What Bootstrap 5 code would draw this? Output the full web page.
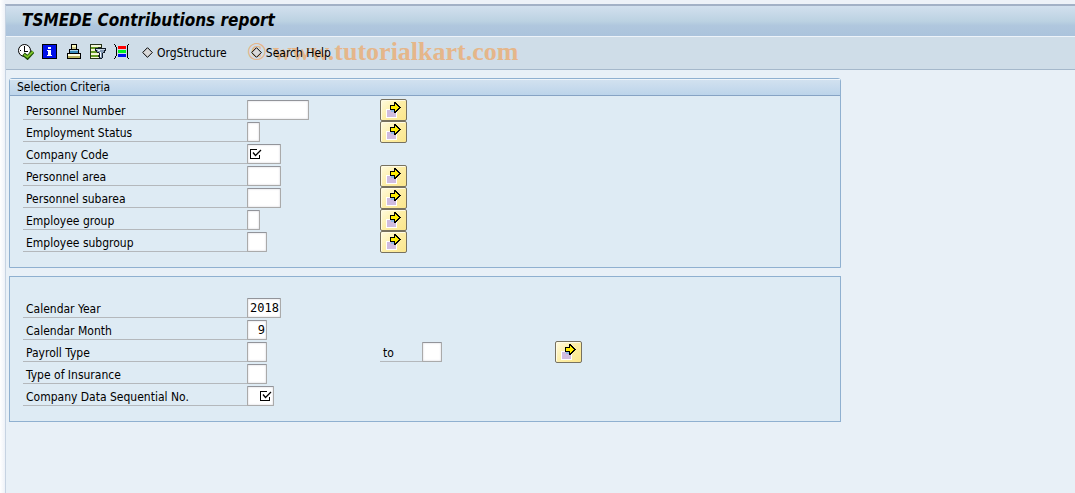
<!DOCTYPE html>
<html lang="en">
<head>
<meta charset="utf-8">
<meta name="viewport" content="width=device-width, initial-scale=1">
<title>TSMEDE Contributions report</title>
<link rel="stylesheet" href="https://cdn.jsdelivr.net/npm/bootstrap@5.3.0/dist/css/bootstrap.min.css">
<style>
  body { font-family: "DejaVu Sans Condensed", "DejaVu Sans", sans-serif; font-size: 12px; line-height: 16px; color: #000; background: linear-gradient(90deg, #fff, #eef2f8 5px); padding: 4px 0 0 5px; }
  .sap-window { background: #e8f0f7; border-left: 1px solid #c6d3e2; border-top: 2px solid #a3b1c6; }
  .title-bar { height: 31px; padding: 0 0 2px 16px; background: linear-gradient(#d2e0ee, #bcd2e2 50%, #b0c7de 65%, #abc3dc); border-bottom: 1px solid #edf3f9; }
  .title-bar h1 { font-size: 17px; line-height: 20px; font-weight: 700; font-style: italic; margin: 0; }
  .tool-bar { height: 33px; padding: 0 0 2px 12px; background: #cfdde8; border-bottom: 1px solid #a5b8cb; }
  .tool-btn { border: 0; padding: 0; background: none; color: #000; display: flex; align-items: center; position: relative; z-index: 1; }
  .tool-btn svg { display: block; }
  .text-btn { gap: 3px; padding-top: 1px; }
  .text-btn + .text-btn { margin-left: 24px; }
  .icon-group { gap: 8px; margin-right: 12px; }
  .watermark { left: 241px; top: 0; font: 700 26px/30px "Liberation Serif", serif; color: #e5b68a; white-space: nowrap; pointer-events: none; }
  .workspace { padding: 8px 3px 71px; }
  .panel { width: 100%; max-width: 832px; background: #deebf4; border: 1px solid #8fb0d0; margin: 0 0 8px; }
  .panel-title { font-size: 12px; line-height: 15px; height: 17px; padding: 1px 7px; margin: 0; background: linear-gradient(#d3e2f0, #bcd4ea); border-bottom: 1px solid #86a3c4; box-shadow: inset 0 1px #edf4fa; }
  .panel-rounded { border-radius: 3px 3px 0 0; }
  .panel-body { padding: 3px 13px 14px; }
  .panel-body-tall { padding-top: 20px; }
  .field-row { display: grid; grid-template-columns: 224px 133px 42px 133px 1fr; height: 22px; align-items: center; }
  .field-label { height: 20px; line-height: 23px; padding-left: 3px; border-bottom: 1px solid #b4b8bc; white-space: nowrap; }
  .field { position: relative; height: 20px; }
  .field input { display: block; height: 20px; padding: 0 1px; border: 1px solid #aaa; border-top-color: #92949a; border-radius: 1px; background: #fff; box-shadow: inset 0 0 2px #c9c9d0; font: 12px/18px "DejaVu Sans Mono", monospace; color: #000; }
  .field input:focus { outline: 1px solid #e0a030; }
  .w-1 { width: 13px; } .w-2 { width: 20px; } .w-3 { width: 27px; } .w-4 { width: 34px; } .w-8 { width: 62px; }
  .required-mark { position: absolute; top: 4px; left: 3px; pointer-events: none; }
  .required-end { left: 13px; }
  .more-btn { width: 27px; height: 22px; padding: 0; border: 1px solid #77715f; border-radius: 2px; background: linear-gradient(135deg, #fffbe0, #fdeea6 50%, #fbe68c); box-shadow: inset 1px 1px #fffbe4; display: flex; align-items: center; justify-content: center; }
</style>
<script src="https://cdn.jsdelivr.net/npm/bootstrap@5.3.0/dist/js/bootstrap.bundle.min.js"></script>
</head>
<body>
<svg class="d-none" aria-hidden="true">
  <symbol id="arrow" viewBox="0 0 17 16"><g shape-rendering="crispEdges"><path fill="#fff" d="M1 7h11v9H1z"/><path fill="#d0bce0" d="M2 8h9v7H2z"/><path fill="#91b9e4" d="M6 8h4v2H6z"/><path fill="#000" d="M9 0h2v1h1v1h1v1h1v1h1v1h1v1h-1v1h-1v1h-1v1h-1v1h-1v1H9V8H5V3h4z"/><path fill="#ffec00" d="M10 2h1v1h1v1h1v1h1v1h-1v1h-1v1h-1v1h-1V7H6V4h4z"/></g></symbol>
  <symbol id="tick" viewBox="0 0 12 12"><path fill="none" stroke="#000" shape-rendering="crispEdges" d="M7 1.500H.5v9h9V7"/><path fill="none" stroke="#000" stroke-width="1.300" d="M3 4.500l2.500 3L11 2"/></symbol>
  <symbol id="diamond" viewBox="0 0 12 12"><path fill="#d9d9d9" stroke="#000" d="M5.500.7l4.800 4.800-4.800 4.800L.7 5.500z"/></symbol>
</svg>
<main class="sap-window">
  <header class="title-bar d-flex align-items-center"><h1>TSMEDE Contributions report</h1></header>
  <div class="tool-bar d-flex align-items-center position-relative" role="toolbar" aria-label="Application toolbar">
    <div class="icon-group d-flex">
    <button class="tool-btn" type="button" aria-label="Execute"><svg width="16" height="16" viewBox="0 0 16 16"><circle cx="6.500" cy="6.500" r="6" fill="#fff" stroke="#000"/><path stroke="#000" fill="none" d="M6.500 2v5M6 7.500h4"/><path d="M2 6.500h1M6 10.500h1" stroke="#000"/><path d="M5.500 10l4 3.500L15 7.500" fill="none" stroke="#174a00" stroke-width="4"/><path d="M6 10.500l3.500 2.500L15 7.500" fill="none" stroke="#7cc22a" stroke-width="2"/></svg></button>
    <button class="tool-btn" type="button" aria-label="Information"><svg width="16" height="16" viewBox="0 0 16 16" shape-rendering="crispEdges"><path d="M0 0h15v15H0z"/><path fill="#0010e8" d="M1 1h13v13H1z"/><path fill="#fff" d="M6 3h3v2H6zM5 6h4v5h1v1H5v-1h1V7H5z"/></svg></button>
    <button class="tool-btn" type="button" aria-label="Print"><svg width="16" height="16" viewBox="0 0 16 16" shape-rendering="crispEdges"><path d="M5 0h6v5h2v4h2v6H1V9h2V5h2z"/><path fill="#fdfbc0" d="M6 1h4v2H6z"/><path fill="#cfc98c" d="M6 3h4v2H6z"/><path fill="#a9d4ea" d="M4 6h8v1H4z"/><path fill="#3689b8" d="M4 7h8v2H4z"/><path fill="#fffde0" d="M2 10h12v2H2z"/><path fill="#b5b25c" d="M2 12h12v2H2z"/></svg></button>
    <button class="tool-btn" type="button" aria-label="Dynamic selections"><svg width="16" height="16" viewBox="0 0 16 16" shape-rendering="crispEdges"><path d="M0 0h12v15H0z" fill="#26331a"/><path fill="#f5f5d8" d="M1 1h10v2H1zM1 5h10v2H1zM1 9h10v2H1zM1 13h10v1H1z"/><path fill="#659a25" d="M1 3h7v2H1zM1 7h7v2H1zM1 11h7v2H1z"/><path fill="#111b26" d="M5 4h11v3h-1v2h-2v5h-1v1H9V9H7V8H6V7H5z"/><path fill="#c5d6e5" d="M6 5h9v1H6z"/><path fill="#8299b4" d="M7 6h7v2H7zM9 8h4v1H9zM10 9h2v5h-2z"/><path fill="#f4faff" d="M8 6h2v1H8zM10 8h1v5h-1z"/></svg></button>
    <button class="tool-btn" type="button" aria-label="Get variant"><svg width="16" height="16" viewBox="0 0 16 16" shape-rendering="crispEdges"><path fill="#f00" d="M4 2h8v3H4z"/><path fill="#0e2" d="M4 6h8v3H4z"/><path fill="#0010ee" d="M4 10h8v3H4z"/><path d="M0 0h1v1H0zM1 1h1v2H1zM2 3h1v9H2zM1 12h1v2H1zM0 14h1v1H0zM15 0h-1v1h1zM14 1h-1v2h1zM13 3h1v9h-1zM13 12h1v2h-1zM14 14h1v1h-1z"/></svg></button>
    </div>
    <button class="tool-btn text-btn" type="button"><svg width="12" height="12"><use href="#diamond"/></svg>OrgStructure</button>
    <button class="tool-btn text-btn" type="button"><svg width="12" height="12"><use href="#diamond"/></svg>Search Help</button>
    <span class="watermark position-absolute">© www.tutorialkart.com</span>
  </div>
  <form class="workspace" onsubmit="return false">
    <section class="panel panel-rounded" aria-labelledby="criteria">
      <h2 class="panel-title" id="criteria">Selection Criteria</h2>
      <div class="panel-body">
        <div class="field-row"><label class="field-label" for="pernr">Personnel Number</label><div class="field"><input class="w-8" id="pernr" type="text"></div><button class="more-btn" type="button" aria-label="Multiple selection"><svg width="17" height="16"><use href="#arrow"/></svg></button></div>
        <div class="field-row"><label class="field-label" for="status">Employment Status</label><div class="field"><input class="w-1" id="status" type="text"></div><button class="more-btn" type="button" aria-label="Multiple selection"><svg width="17" height="16"><use href="#arrow"/></svg></button></div>
        <div class="field-row"><label class="field-label" for="company">Company Code</label><div class="field"><input class="w-4" id="company" type="text" required><svg class="required-mark" width="12" height="12"><use href="#tick"/></svg></div></div>
        <div class="field-row"><label class="field-label" for="area">Personnel area</label><div class="field"><input class="w-4" id="area" type="text"></div><button class="more-btn" type="button" aria-label="Multiple selection"><svg width="17" height="16"><use href="#arrow"/></svg></button></div>
        <div class="field-row"><label class="field-label" for="subarea">Personnel subarea</label><div class="field"><input class="w-4" id="subarea" type="text"></div><button class="more-btn" type="button" aria-label="Multiple selection"><svg width="17" height="16"><use href="#arrow"/></svg></button></div>
        <div class="field-row"><label class="field-label" for="group">Employee group</label><div class="field"><input class="w-1" id="group" type="text"></div><button class="more-btn" type="button" aria-label="Multiple selection"><svg width="17" height="16"><use href="#arrow"/></svg></button></div>
        <div class="field-row"><label class="field-label" for="subgroup">Employee subgroup</label><div class="field"><input class="w-2" id="subgroup" type="text"></div><button class="more-btn" type="button" aria-label="Multiple selection"><svg width="17" height="16"><use href="#arrow"/></svg></button></div>
      </div>
    </section>
    <section class="panel mb-0" aria-label="Period and insurance">
      <div class="panel-body panel-body-tall">
        <div class="field-row"><label class="field-label" for="year">Calendar Year</label><div class="field"><input class="w-4 text-end" id="year" type="text" value="2018"></div></div>
        <div class="field-row"><label class="field-label" for="month">Calendar Month</label><div class="field"><input class="w-2 text-end" id="month" type="text" value="9"></div></div>
        <div class="field-row"><label class="field-label" for="payroll">Payroll Type</label><div class="field"><input class="w-2" id="payroll" type="text"></div><label class="field-label" for="payroll-to">to</label><div class="field"><input class="w-2" id="payroll-to" type="text"></div><button class="more-btn" type="button" aria-label="Multiple selection"><svg width="17" height="16"><use href="#arrow"/></svg></button></div>
        <div class="field-row"><label class="field-label" for="insurance">Type of Insurance</label><div class="field"><input class="w-2" id="insurance" type="text"></div></div>
        <div class="field-row"><label class="field-label" for="sequence">Company Data Sequential No.</label><div class="field"><input class="w-3" id="sequence" type="text" required><svg class="required-mark required-end" width="12" height="12"><use href="#tick"/></svg></div></div>
      </div>
    </section>
  </form>
</main>
</body>
</html>
